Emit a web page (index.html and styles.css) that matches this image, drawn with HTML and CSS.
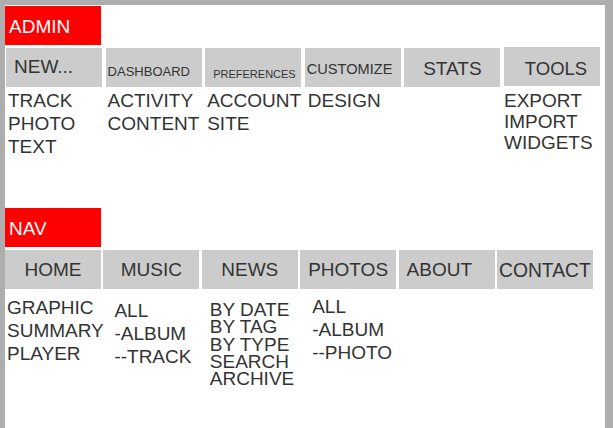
FILE: index.html
```html
<!DOCTYPE html>
<html lang="en">
<head>
  <meta charset="UTF-8" />
  <title>Site Map</title>
  <link rel="stylesheet" href="styles.css">
</head>
<body>
  <div class="sheet">

    <section class="group group-admin">
      <div class="label">ADMIN</div>
      <div class="menu menu-admin">
        <div class="column">
          <div class="tab tab-new">NEW...</div>
          <ul class="items items-new">
            <li>TRACK</li>
            <li>PHOTO</li>
            <li>TEXT</li>
          </ul>
        </div>
        <div class="column">
          <div class="tab tab-dashboard">DASHBOARD</div>
          <ul class="items items-dashboard">
            <li>ACTIVITY</li>
            <li>CONTENT</li>
          </ul>
        </div>
        <div class="column">
          <div class="tab tab-preferences">PREFERENCES</div>
          <ul class="items items-preferences">
            <li>ACCOUNT</li>
            <li>SITE</li>
          </ul>
        </div>
        <div class="column">
          <div class="tab tab-customize">CUSTOMIZE</div>
          <ul class="items items-customize">
            <li>DESIGN</li>
          </ul>
        </div>
        <div class="column">
          <div class="tab tab-stats">STATS</div>
        </div>
        <div class="column column-tools">
          <div class="tab tab-tools">TOOLS</div>
          <ul class="items items-tools">
            <li>EXPORT</li>
            <li>IMPORT</li>
            <li>WIDGETS</li>
          </ul>
        </div>
      </div>
    </section>

    <section class="group group-nav">
      <div class="label">NAV</div>
      <div class="menu menu-nav">
        <div class="column">
          <div class="tab tab-home">HOME</div>
          <ul class="items items-home">
            <li>GRAPHIC</li>
            <li>SUMMARY</li>
            <li>PLAYER</li>
          </ul>
        </div>
        <div class="column">
          <div class="tab tab-music">MUSIC</div>
          <ul class="items items-music">
            <li>ALL</li>
            <li>-ALBUM</li>
            <li>--TRACK</li>
          </ul>
        </div>
        <div class="column">
          <div class="tab tab-news">NEWS</div>
          <ul class="items items-news">
            <li>BY DATE</li>
            <li>BY TAG</li>
            <li>BY TYPE</li>
            <li>SEARCH</li>
            <li>ARCHIVE</li>
          </ul>
        </div>
        <div class="column">
          <div class="tab tab-photos">PHOTOS</div>
          <ul class="items items-photos">
            <li>ALL</li>
            <li>-ALBUM</li>
            <li>--PHOTO</li>
          </ul>
        </div>
        <div class="column">
          <div class="tab tab-about">ABOUT</div>
        </div>
        <div class="column">
          <div class="tab tab-contact">CONTACT</div>
        </div>
      </div>
    </section>

  </div>
</body>
</html>
```

FILE: styles.css
```css
 body {
   margin: 0;
   padding: 5px 8px 0 5px;
   background: #aeaeae;
   font-family: "Liberation Sans", Arial, sans-serif;
   color: #333;
 }
 .sheet {
   width: 600px;
   min-height: 423px;
   background: #fff;
   padding-top: 1px;
   box-sizing: border-box;
 }

 /* red section headers */
 .label {
   width: 96px;
   height: 39px;
   box-sizing: border-box;
   padding: 10px 0 0 4px;
   background: #f00;
   color: #fff;
   font-size: 19px;
 }

 .menu {
   display: flex;
   align-items: flex-start;
   margin-top: 3px;
 }
 .menu-admin {
   gap: 3.6px;
   padding-left: 1px;
 }
 .menu-nav {
   gap: 2.4px;
   margin-top: 3px;
 }
 .column {
   width: 96px;
   flex: none;
 }
 .column-tools {
   margin-top: -1px;
 }

 .tab {
   height: 39px;
   box-sizing: border-box;
   background: #ccc;
   font-size: 19px;
   white-space: nowrap;
   padding-top: 9.4px;
 }
 .tab-new { padding: 8.4px 0 0 8px; }
 .tab-dashboard { font-size: 13px; padding: 15.5px 0 0 2px; }
 .tab-preferences { font-size: 11px; padding: 19.9px 0 0 8px; }
 .tab-customize { font-size: 14.6px; padding: 13.3px 0 0 2px; }
 .tab-stats { padding-top: 10.4px; text-align: center; }
 .tab-tools { font-size: 18.5px; padding: 10.5px 0 0 8px; text-align: center; }
 .tab-home,
 .tab-music,
 .tab-news { text-align: center; }
 .tab-photos,
 .tab-about { padding-left: 8px; }
 .tab-contact { font-size: 19.3px; padding: 10.3px 0 0 2px; }

 /* sub items under each tab */
 .items {
   list-style: none;
   margin: 0;
   padding: 1.5px 0 0 2px;
   font-size: 19px;
   line-height: 23px;
   white-space: nowrap;
 }
 .items-customize { padding-left: 3px; }
 .items-tools { padding: 3.5px 0 0 0; line-height: 21px; }
 .items-home { padding: 6.5px 0 0 2px; }
 .items-music { padding: 9.5px 0 0 11px; }
 .items-news { padding: 12px 0 0 8px; line-height: 17.3px; }
 .items-photos { padding: 5.5px 0 0 12px; }

 .group-nav {
   margin-top: 50.5px;
 }
```
